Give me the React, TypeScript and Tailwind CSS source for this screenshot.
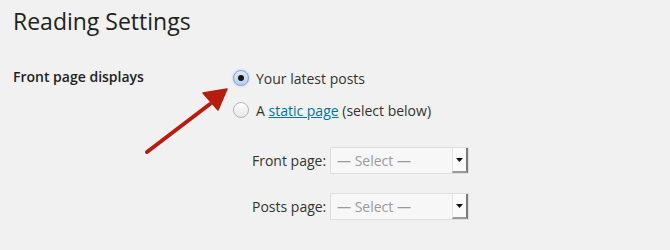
import React from "react";

function Radio({ checked }: { checked?: boolean }) {
  return (
    <span
      className={
        "w-[16px] h-[16px] rounded-full flex items-center justify-center shrink-0 border " +
        (checked
          ? "border-[#7fa6d9] bg-gradient-to-b from-[#dfe9f8] to-[#b8cdee] shadow-[0_0_2px_rgba(80,140,220,0.6)]"
          : "border-[#b4b4b4] bg-gradient-to-b from-[#ffffff] to-[#e6e6e6]")
      }
    >
      {checked && <span className="w-[6px] h-[6px] rounded-full bg-[#1a1a1a]" />}
    </span>
  );
}

function SelectBox() {
  return (
    <div className="w-[139px] h-[27px] flex bg-[#f7f7f7] border border-[#dedede]">
      <span className="flex-1 pl-[6px] text-[14px] leading-[25px] text-[#9a9a9a]">— Select —</span>
      <span className="w-[16px] flex items-center justify-center bg-[#fafafa] border-l border-[#e4e4e4] border-r-[2px] border-b-[2px] border-r-[#7a7a7a] border-b-[#9a9a9a]">
        <svg width="7" height="4" viewBox="0 0 7 4">
          <path d="M0 0h7L3.5 4z" fill="#111" />
        </svg>
      </span>
    </div>
  );
}

export default function App() {
  return (
    <div
      className="relative w-[670px] h-[250px] bg-[#f1f1f1] text-[#333] overflow-hidden"
      style={{ fontFamily: '"Open Sans", "Noto Sans", sans-serif' }}
    >
      <h1 className="pl-[13px] pt-[5px] text-[23px] leading-[32px] font-normal text-[#222]">Reading Settings</h1>

      <div className="flex mt-[29px]">
        <div className="w-[220px] pl-[13px] text-[14px] font-semibold text-[#222]">Front page displays</div>
        <div className="flex flex-col">
          <label className="flex items-center gap-[7px] ml-[13px] h-[24px]">
            <Radio checked />
            <span className="text-[14px]">Your latest posts</span>
          </label>
          <label className="flex items-center gap-[7px] ml-[13px] mt-[8px] h-[24px]">
            <Radio />
            <span className="text-[14px]">
              A <a className="text-[#0074a2] underline">static page</a> (select below)
            </span>
          </label>
          <div className="ml-[32px] mt-[25px] flex flex-col gap-[19px]">
            <div className="flex items-center">
              <span className="w-[78px] text-[14px]">Front page:</span>
              <SelectBox />
            </div>
            <div className="flex items-center">
              <span className="w-[78px] text-[14px]">Posts page:</span>
              <SelectBox />
            </div>
          </div>
        </div>
      </div>

      <svg className="absolute left-0 top-0" width="670" height="250" viewBox="0 0 670 250">
        <path d="M147 152 L210 104" stroke="#b81c0e" strokeWidth="4" strokeLinecap="round" />
        <path d="M227 89 L203 93 L218 110 Z" fill="#b81c0e" stroke="#b81c0e" strokeWidth="1.5" strokeLinejoin="round" />
      </svg>
    </div>
  );
}
